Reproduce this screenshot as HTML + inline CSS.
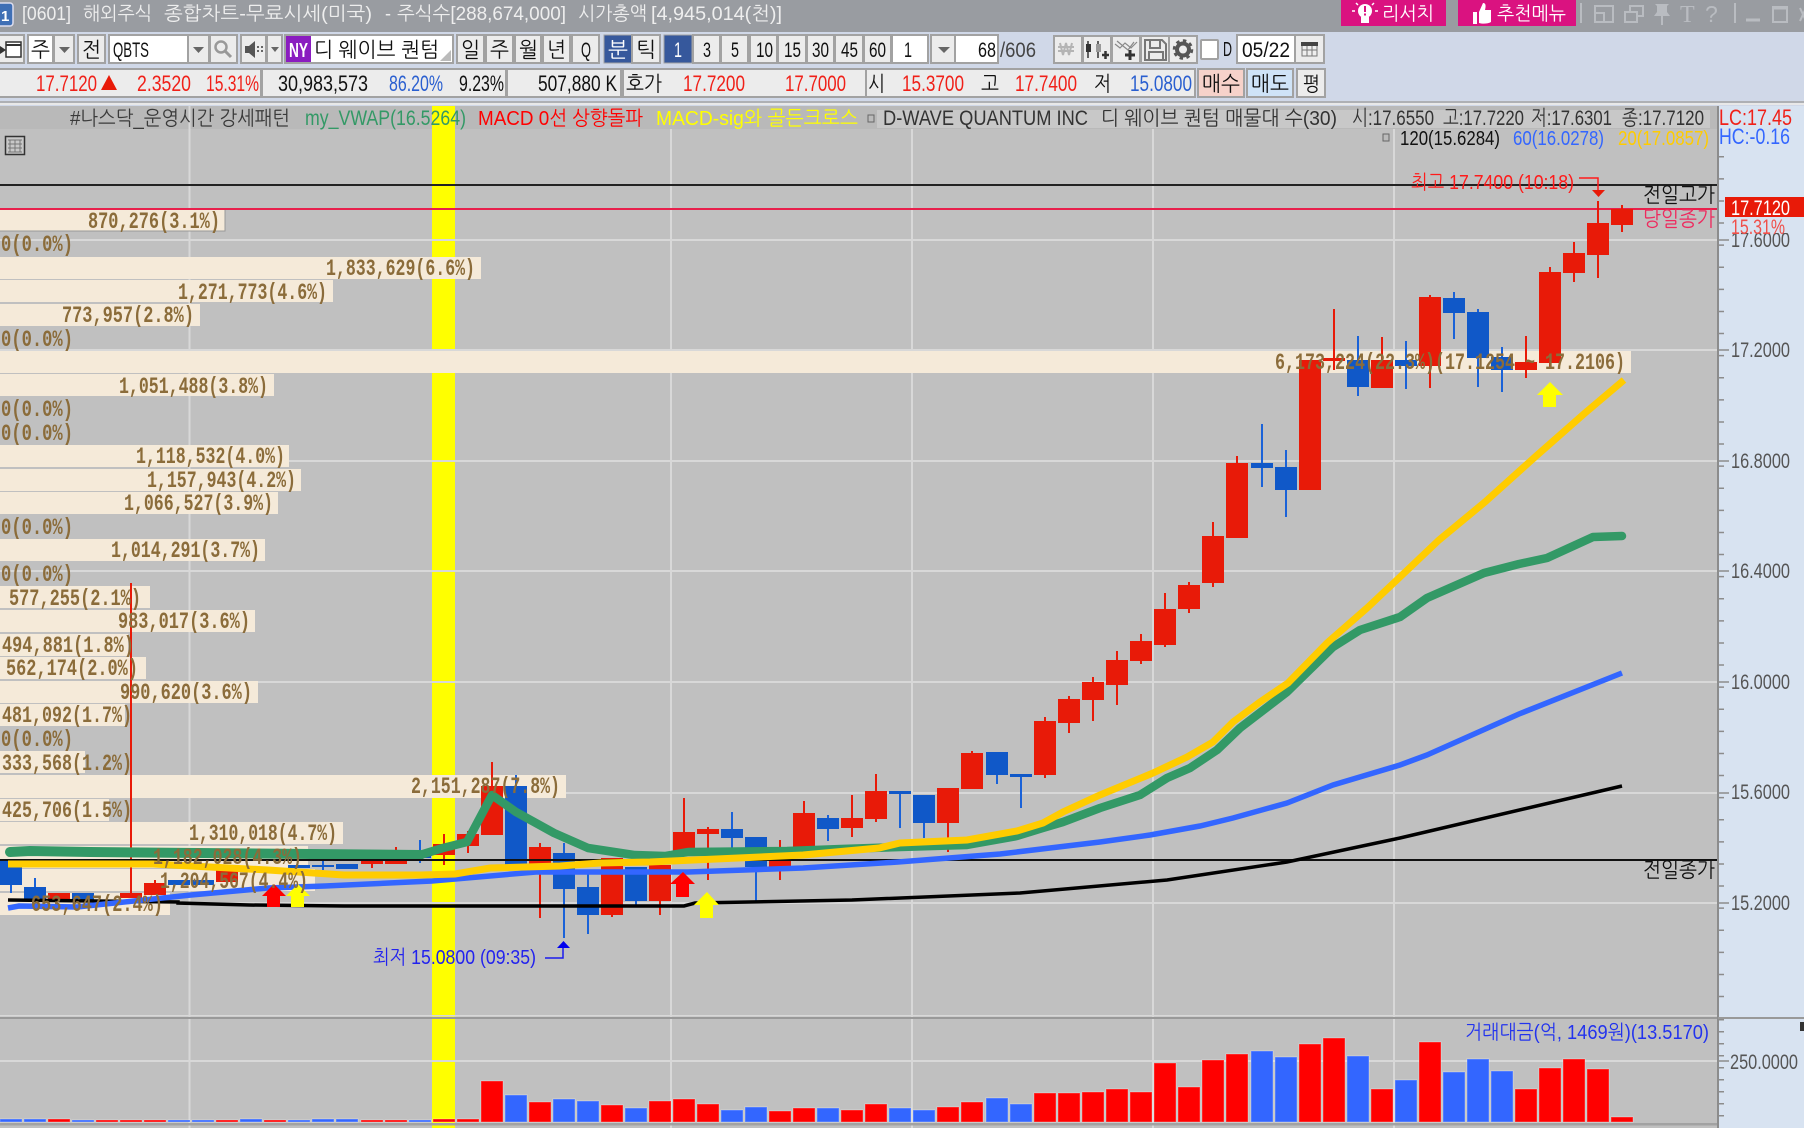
<!DOCTYPE html>
<html><head><meta charset="utf-8"><style>
html,body{margin:0;padding:0;background:#c0c0c0;width:1804px;height:1128px;overflow:hidden}
svg{display:block;position:absolute;left:0;top:0}
text{font-family:"Liberation Sans","NanumGothic","Noto Sans CJK KR",sans-serif;white-space:pre}
.b{fill:#ececec;stroke:#a2a2a2;stroke-width:2}
.w{fill:#fff;stroke:#a2a2a2;stroke-width:2}
.p text{font-family:"Liberation Mono",monospace;font-weight:bold;font-size:23px;fill:#8b6c3a;text-anchor:end}
</style></head><body>
<svg width="1804" height="1128" viewBox="0 0 1804 1128" xmlns="http://www.w3.org/2000/svg">
<!-- title bar -->
<rect width="1804" height="32" fill="#999ca1"/>
<rect x="-4" y="3" width="17" height="23" rx="3" fill="#3f6fb5" stroke="#dde" stroke-width="1.5"/>
<text x="1" y="21" font-size="15" font-weight="bold" fill="#fff">1</text>
<g font-size="19" fill="#eeeeee">
<text x="22" y="20" font-size="19" fill="#eeeeee" textLength="49" lengthAdjust="spacingAndGlyphs">[0601]</text>
<text x="83" y="20" font-size="19" fill="#eeeeee" textLength="69" lengthAdjust="spacingAndGlyphs">해외주식</text>
<text x="164" y="20" font-size="19" fill="#eeeeee" textLength="208" lengthAdjust="spacingAndGlyphs">종합차트-무료시세(미국)</text>
<text x="385" y="20" font-size="19" fill="#eeeeee" textLength="6" lengthAdjust="spacingAndGlyphs">-</text>
<text x="397" y="20" font-size="19" fill="#eeeeee" textLength="169" lengthAdjust="spacingAndGlyphs">주식수[288,674,000]</text>
<text x="578" y="20" font-size="19" fill="#eeeeee" textLength="69" lengthAdjust="spacingAndGlyphs">시가총액</text>
<text x="651" y="20" font-size="19" fill="#eeeeee" textLength="131" lengthAdjust="spacingAndGlyphs">[4,945,014(천)]</text>
</g>
<rect x="1341" y="0" width="105" height="26" fill="#da1280"/>
<rect x="1458" y="0" width="118" height="26" fill="#da1280"/>
<g fill="#fff"><circle cx="1365" cy="11" r="7"/><rect x="1361" y="17" width="8" height="6"/>
<path d="M1352 11h3M1375 11h3M1356 3l2 2M1374 3l-2 2" stroke="#fff" stroke-width="1.5"/>
<path d="M1473 12h4v12h-4zM1479 12l4-9c3 0 3 3 2 7h6v12c-3 2-9 2-12 1z"/></g>
<rect x="1364" y="6" width="2" height="6" fill="#da1280"/><rect x="1364" y="13.500" width="2" height="2" fill="#da1280"/>
<text x="1382" y="20" font-size="19" fill="#fff" textLength="52" lengthAdjust="spacingAndGlyphs">리서치</text>
<text x="1497" y="20" font-size="19" fill="#fff" textLength="69" lengthAdjust="spacingAndGlyphs">추천메뉴</text>
<g fill="none" stroke="#b9bcc1" stroke-width="2">
<path d="M1581 3v20M1735 3v20"/>
<path d="M1595 6h18v16h-18zM1595 13h9v9"/>
<path d="M1625 12h12v10h-12zM1630 12v-6h13v10h-6"/>
<path d="M1746 20h14" stroke-width="3"/><path d="M1773 7h14v15h-14z"/><path d="M1773 8h14" stroke-width="3"/>
<path d="M1800 8l6 13M1806 8l-6 13"/>
</g>
<path d="M1655 4h14l-2 2v6l3 4h-7v9h-2v-9h-7l3-4v-6z" fill="#b9bcc1"/>
<text x="1680" y="22" font-size="24" fill="#b9bcc1" style="font-family:'Liberation Serif',serif">T</text>
<text x="1705" y="22" font-size="23" fill="#b9bcc1">?</text>
<!-- toolbar -->
<rect y="32" width="1804" height="74" fill="#d0d8e8"/>
<rect y="101" width="1804" height="2" fill="#aeb0b4"/><rect y="103" width="1804" height="2" fill="#e8e8e8"/>
<!-- row 1 -->
<rect class="b" x="-3" y="35" width="27" height="28"/>
<path d="M6 42h15v15H6z" fill="#fff" stroke="#333" stroke-width="1.5"/><path d="M-3 44l9 6-9 6z" fill="#333"/><path d="M6 45h15" stroke="#333" stroke-width="2"/>
<rect class="w" x="28" y="35" width="25" height="28"/><rect class="b" x="54" y="35" width="20" height="28"/>
<path d="M59 47h11l-5.500 6z" fill="#666"/>
<text x="31" y="57" font-size="21" fill="#111" textLength="19" lengthAdjust="spacingAndGlyphs">주</text>
<rect class="b" x="78" y="35" width="27" height="28"/>
<text x="82" y="57" font-size="21" fill="#111" textLength="19" lengthAdjust="spacingAndGlyphs">전</text>
<rect class="w" x="109" y="35" width="79" height="28"/>
<text x="113" y="57" font-size="21" fill="#111" textLength="36" lengthAdjust="spacingAndGlyphs">QBTS</text>
<rect class="b" x="188" y="35" width="21" height="28"/><path d="M193 47h11l-5.500 6z" fill="#666"/>
<rect class="b" x="210" y="35" width="27" height="28"/>
<circle cx="221" cy="47" r="5.500" fill="none" stroke="#999" stroke-width="2.500"/><path d="M225 51l6 6" stroke="#999" stroke-width="3"/>
<rect class="b" x="241" y="35" width="25" height="28"/><rect class="b" x="267" y="35" width="15" height="28"/>
<path d="M245 46h4l6-5v17l-6-5h-4z" fill="#555"/><path d="M257 46h2v2h-2zM261 46h2v2h-2zM261 50h2v2h-2zM257 50h2v2h-2z" fill="#666"/>
<path d="M271 47h8l-4 5z" fill="#666"/>
<rect class="w" x="285" y="35" width="168" height="28"/>
<path d="M451 61h-11l11-11z" fill="#bbb"/>
<rect x="286" y="36" width="25" height="26" fill="#8a1cc0"/>
<text x="289" y="57" font-size="20" fill="#fff" font-weight="bold" textLength="19" lengthAdjust="spacingAndGlyphs">NY</text>
<text x="314" y="57" font-size="21" fill="#111" textLength="125" lengthAdjust="spacingAndGlyphs">디 웨이브 퀀텀</text>
<g>
<rect class="b" x="457" y="35" width="27" height="28"/><rect class="b" x="486" y="35" width="27" height="28"/><rect class="b" x="515" y="35" width="26" height="28"/><rect class="b" x="543" y="35" width="27" height="28"/><rect class="b" x="572" y="35" width="27" height="28"/>
<text x="461" y="57" font-size="21" fill="#111" textLength="19" lengthAdjust="spacingAndGlyphs">일</text>
<text x="490" y="57" font-size="21" fill="#111" textLength="19" lengthAdjust="spacingAndGlyphs">주</text>
<text x="519" y="57" font-size="21" fill="#111" textLength="19" lengthAdjust="spacingAndGlyphs">월</text>
<text x="547" y="57" font-size="21" fill="#111" textLength="19" lengthAdjust="spacingAndGlyphs">년</text>
<text x="581" y="57" font-size="21" fill="#111" textLength="10" lengthAdjust="spacingAndGlyphs">Q</text>
</g>
<rect x="604" y="35" width="28" height="28" fill="#36589c" stroke="#a2a2a2"/>
<text x="608" y="57" font-size="21" fill="#fff" textLength="20" lengthAdjust="spacingAndGlyphs">분</text>
<rect class="b" x="632" y="35" width="28" height="28"/>
<text x="636" y="57" font-size="21" fill="#111" textLength="20" lengthAdjust="spacingAndGlyphs">틱</text>
<rect x="664" y="35" width="28" height="28" fill="#36589c" stroke="#a2a2a2"/>
<text x="674" y="57" font-size="21" fill="#fff" textLength="8" lengthAdjust="spacingAndGlyphs">1</text>
<rect class="b" x="693" y="35" width="27" height="28"/><rect class="b" x="721" y="35" width="27" height="28"/><rect class="b" x="750" y="35" width="27" height="28"/><rect class="b" x="778" y="35" width="28" height="28"/><rect class="b" x="807" y="35" width="27" height="28"/><rect class="b" x="835" y="35" width="28" height="28"/><rect class="b" x="864" y="35" width="27" height="28"/>
<rect class="w" x="892" y="35" width="36" height="28"/>
<text x="703" y="57" font-size="21" fill="#111" textLength="8" lengthAdjust="spacingAndGlyphs">3</text>
<text x="731" y="57" font-size="21" fill="#111" textLength="8" lengthAdjust="spacingAndGlyphs">5</text>
<text x="756" y="57" font-size="21" fill="#111" textLength="17" lengthAdjust="spacingAndGlyphs">10</text>
<text x="784" y="57" font-size="21" fill="#111" textLength="17" lengthAdjust="spacingAndGlyphs">15</text>
<text x="812" y="57" font-size="21" fill="#111" textLength="17" lengthAdjust="spacingAndGlyphs">30</text>
<text x="841" y="57" font-size="21" fill="#111" textLength="17" lengthAdjust="spacingAndGlyphs">45</text>
<text x="869" y="57" font-size="21" fill="#111" textLength="17" lengthAdjust="spacingAndGlyphs">60</text>
<text x="904" y="57" font-size="21" fill="#111" textLength="8" lengthAdjust="spacingAndGlyphs">1</text>
<rect class="b" x="931" y="35" width="26" height="28"/><path d="M938 47h12l-6 6z" fill="#666"/>
<rect class="w" x="955" y="35" width="43" height="28"/>
<text x="978" y="57" font-size="21" fill="#111" textLength="18" lengthAdjust="spacingAndGlyphs">68</text>
<text x="1000" y="57" font-size="21" fill="#444" textLength="36" lengthAdjust="spacingAndGlyphs">/606</text>
<rect class="b" x="1054" y="36" width="28" height="27"/><rect class="b" x="1083" y="36" width="28" height="27"/><rect class="b" x="1112" y="36" width="28" height="27"/><rect class="b" x="1141" y="36" width="28" height="27"/><rect class="b" x="1169" y="36" width="28" height="27"/>
<path d="M1060 43l3 12 3-12 3 12 3-12M1058 47h16M1058 51h16" fill="none" stroke="#b4b4b4" stroke-width="2"/>
<path d="M1088 41v17M1098 41v17" stroke="#333" stroke-width="1.500"/><rect x="1086" y="44" width="5" height="8" fill="#333"/><rect x="1096" y="44" width="5" height="8" fill="#999"/><path d="M1102 55h7M1105.500 51v8" stroke="#333" stroke-width="2.500"/>
<path d="M1115 44l5 4 5-5 6 5 6-6M1117 41l6 5 5 4 6-8" fill="none" stroke="#888" stroke-width="1.200"/><path d="M1125 55h10M1130 50v10" stroke="#333" stroke-width="3"/>
<path d="M1145 40h17l4 4v16h-21z M1150 41v7h10v-7 M1149 60v-8h14v8" fill="none" stroke="#777" stroke-width="2"/>
<circle cx="1183" cy="49.500" r="6" fill="none" stroke="#555" stroke-width="4"/><circle cx="1183" cy="49.500" r="9" fill="none" stroke="#555" stroke-width="2.500" stroke-dasharray="3.500 3.500"/>
<rect class="w" x="1201" y="40" width="17" height="19" rx="1"/>
<text x="1223" y="56" font-size="20" fill="#111" textLength="9" lengthAdjust="spacingAndGlyphs">D</text>
<rect class="w" x="1237" y="35" width="58" height="28"/>
<text x="1242" y="57" font-size="21" fill="#111" textLength="48" lengthAdjust="spacingAndGlyphs">05/22</text>
<rect class="b" x="1295" y="35" width="29" height="28"/>
<path d="M1302 44h15v12h-15zM1302 50h15M1307 44v12M1312 44v12" fill="#eee" stroke="#777" stroke-width="1"/><rect x="1301" y="42" width="17" height="4" fill="#444"/>
<!-- row 2 -->
<rect class="b" x="-2" y="69" width="263" height="28"/><rect class="b" x="262" y="69" width="244" height="28"/><rect class="b" x="507" y="69" width="114" height="28"/><rect class="b" x="623" y="69" width="243" height="28"/><rect class="b" x="866" y="69" width="329" height="28"/>
<text x="36" y="91" font-size="22" fill="#f02018" textLength="61" lengthAdjust="spacingAndGlyphs">17.7120</text>
<path d="M109 75l8 15h-16z" fill="#e81a08"/>
<text x="137" y="91" font-size="22" fill="#f02018" textLength="54" lengthAdjust="spacingAndGlyphs">2.3520</text>
<text x="206" y="91" font-size="22" fill="#f02018" textLength="53" lengthAdjust="spacingAndGlyphs">15.31%</text>
<text x="278" y="91" font-size="22" fill="#111" textLength="90" lengthAdjust="spacingAndGlyphs">30,983,573</text>
<text x="389" y="91" font-size="22" fill="#2a5fd0" textLength="54" lengthAdjust="spacingAndGlyphs">86.20%</text>
<text x="459" y="91" font-size="22" fill="#111" textLength="45" lengthAdjust="spacingAndGlyphs">9.23%</text>
<text x="538" y="91" font-size="22" fill="#111" textLength="79" lengthAdjust="spacingAndGlyphs">507,880 K</text>
<text x="626" y="91" font-size="21" fill="#111" textLength="36" lengthAdjust="spacingAndGlyphs">호가</text>
<text x="683" y="91" font-size="22" fill="#f02018" textLength="62" lengthAdjust="spacingAndGlyphs">17.7200</text>
<text x="785" y="91" font-size="22" fill="#f02018" textLength="61" lengthAdjust="spacingAndGlyphs">17.7000</text>
<text x="868" y="91" font-size="21" fill="#111" textLength="17" lengthAdjust="spacingAndGlyphs">시</text>
<text x="902" y="91" font-size="22" fill="#f02018" textLength="62" lengthAdjust="spacingAndGlyphs">15.3700</text>
<text x="981" y="91" font-size="21" fill="#111" textLength="18" lengthAdjust="spacingAndGlyphs">고</text>
<text x="1015" y="91" font-size="22" fill="#f02018" textLength="62" lengthAdjust="spacingAndGlyphs">17.7400</text>
<text x="1094" y="91" font-size="21" fill="#111" textLength="17" lengthAdjust="spacingAndGlyphs">저</text>
<text x="1130" y="91" font-size="22" fill="#2a5fd0" textLength="62" lengthAdjust="spacingAndGlyphs">15.0800</text>
<rect x="1198" y="69" width="46" height="28" fill="#f6d2ca" stroke="#a2a2a2" stroke-width="2"/>
<text x="1202" y="91" font-size="21" fill="#111" textLength="38" lengthAdjust="spacingAndGlyphs">매수</text>
<rect x="1247" y="69" width="46" height="28" fill="#cfe3f7" stroke="#a2a2a2" stroke-width="2"/>
<text x="1251" y="91" font-size="21" fill="#111" textLength="38" lengthAdjust="spacingAndGlyphs">매도</text>
<rect class="b" x="1297" y="69" width="28" height="28"/>
<text x="1303" y="91" font-size="20" fill="#111" textLength="17" lengthAdjust="spacingAndGlyphs">평</text>

<!-- chart -->
<rect y="106" width="1718" height="1017" fill="#c0c0c0"/>
<rect y="106" width="1718" height="23" fill="#b9b9b9"/>
<rect x="877" y="110" width="833" height="18" fill="#c8c8c8"/>
<rect x="432" y="106" width="23" height="1022" fill="#ffff00"/>
<g fill="none" stroke="#d8d8d8" stroke-width="2">
<path d="M189.500 106V1128M671 129V1128M912 129V1128M1153 129V1128M1394 129V1128"/>
<path d="M0 240H1718M0 350H1718M0 461H1718M0 571H1718M0 682H1718M0 793H1718M0 903H1718M0 1061H1718"/>
</g>
<rect y="1015" width="1718" height="1.500" fill="#d8d8d8"/><rect y="1017" width="1804" height="2" fill="#999"/>
<!-- profile bars -->
<path fill="#f5ead9" d="M0 210H225v21H0zM0 257H481v22H0zM0 280H333v22H0zM0 304H200v22H0zM0 351H1631v22H0zM0 374H274v22H0zM0 445H289v22H0zM0 469H301v22H0zM0 492H278v22H0zM0 539H265v22H0zM0 586H150v22H0zM0 610H255v22H0zM0 634H128v22H0zM0 657H146v22H0zM0 681H258v22H0zM0 704H125v22H0zM0 751H85v22H0zM0 775H566v23H0zM0 799H109v22H0zM0 822H343v22H0zM0 846H308v22H0zM0 869H315v22H0zM0 893H170v22H0z"/>
<path d="M225 210v21H0" fill="none" stroke="#999" stroke-width="1"/>
<!-- small table icon -->
<rect x="5.500" y="136.500" width="19" height="18" fill="#c8c8c8" stroke="#333" stroke-width="1.500"/>
<path d="M8 140h14M8 144h14M8 148h14M8 152h14M10 140v12M15 140v12M20 140v12" stroke="#777" stroke-width="1"/>
<!-- hlines -->
<rect y="184" width="1718" height="2" fill="#222"/>
<rect y="208" width="1718" height="2" fill="#e8204c"/>
<!-- candle wicks -->
<path fill="none" stroke="#e81a08" stroke-width="2" d="M1622 205V232M1598 201V278M1574 242V282M1550 267V368M1526 336V378M1430 295V388M1382 337V388M1334 309V370M1237 456V538M1213 522V587M1189 582V613M1165 593V647M1141 634V664M1117 651V705M1093 677V721M1069 696V733M1045 717V778M972 751V789M948 788V852M876 774V822M852 795V837M804 801V850M780 840V880M708 827V880M684 798V852M660 865V915M612 858V917M540 843V918M492 762V835M468 831V853M444 834V865M396 847V864M372 860V868M227 870V882M155 880V895M131 583V898"/>
<path fill="none" stroke="#1a62d8" stroke-width="2" d="M1502 347V392M1478 309V387M1454 292V339M1406 341V389M1358 336V396M1286 450V517M1262 424V487M1021 777V808M997 775V784M924 823V838M900 794V828M828 815V841M756 837V901M732 812V850M636 867V905M588 873V934M564 843V938M516 775V865M420 840V863M323 860V870M35 878V900M11 885V893"/>
<!-- candle bodies -->
<path fill="#e81a08" d="M1611 209h22V225h-22zM1587 223h22V255h-22zM1563 253h22V273h-22zM1539 272h22V363h-22zM1515 362h22V370h-22zM1419 297h22V366h-22zM1371 360h22V388h-22zM1323 358h22V361h-22zM1299 360h22V490h-22zM1226 463h22V538h-22zM1202 536h22V583h-22zM1178 585h22V609h-22zM1154 609h22V645h-22zM1130 641h22V661h-22zM1106 660h22V685h-22zM1082 682h22V700h-22zM1058 699h22V723h-22zM1034 721h22V775h-22zM961 753h22V789h-22zM937 788h22V823h-22zM865 791h22V819h-22zM841 818h22V828h-22zM793 813h22V850h-22zM769 860h22V867h-22zM697 829h22V834h-22zM673 832h22V852h-22zM649 865h22V901h-22zM601 858h22V915h-22zM529 847h22V872h-22zM481 786h22V835h-22zM457 834h22V846h-22zM433 844h22V855h-22zM385 860h22V864h-22zM361 860h22V864h-22zM216 870h22V882h-22zM144 883h22V895h-22zM120 893h22V898h-22zM48 893h22V900h-22z"/>
<path fill="#1058c8" d="M1491 357h22V370h-22zM1467 312h22V358h-22zM1443 298h22V313h-22zM1395 360h22V366h-22zM1347 360h22V387h-22zM1275 467h22V490h-22zM1251 463h22V468h-22zM1010 774h22V777h-22zM986 752h22V775h-22zM913 795h22V823h-22zM889 791h22V794h-22zM817 818h22V829h-22zM745 837h22V867h-22zM721 829h22V838h-22zM625 867h22V901h-22zM577 887h22V915h-22zM553 853h22V889h-22zM505 786h22V865h-22zM409 856h22V858h-22zM336 864h22V869h-22zM312 865h22V867h-22zM288 865h22V868h-22zM168 880h22V885h-22zM192 880h22V885h-22zM72 893h22V900h-22zM24 887h22V900h-22zM0 860h22V885h-22z"/>
<!-- MAs -->
<polyline fill="none" stroke="#339966" stroke-width="8.500" stroke-linecap="round" stroke-linejoin="round" points="420,855 443,848 467,842 492,795 516,812 554,833 588,848 634,855 665,856 688,852 787,851 841,849 900,847 967,845 1017,836 1043,828 1063,822 1100,808 1140,795 1167,778 1190,768 1217,750 1240,728 1287,692 1333,647 1360,630 1400,617 1427,598 1484,573 1519,564 1547,558 1593,537 1622,536"/>
<polyline fill="none" stroke="#339966" stroke-width="10" stroke-linecap="round" stroke-linejoin="round" points="10,852 30,851 90,852 420,855"/>
<rect y="859" width="1718" height="2" fill="#111"/>
<polyline fill="none" stroke="#000" stroke-width="3.500" points="8,900 178,902 178,903 249,905 344,906 684,906 695,903 852,900 1020,893 1167,880 1287,862 1400,838 1622,786"/>
<polyline fill="none" stroke="#3366ff" stroke-width="5.500" points="8,908 19,906 77,907 191,895 268,888 325,886 432,881 536,872 600,872 688,872 803,868 898,862 1000,854 1100,842 1150,835 1200,826 1233,818 1287,803 1333,785 1400,765 1427,755 1519,714 1622,673"/>
<polyline fill="none" stroke="#ffcc00" stroke-width="7" points="8,864 153,864 268,870 344,875 421,875 455,874 490,868 560,866 600,863 650,862 803,855 879,848 900,843 967,840 1017,831 1043,823 1063,812 1100,795 1153,773 1187,757 1213,742 1233,722 1260,702 1288,683 1327,643 1367,608 1400,577 1439,540 1485,502 1535,457 1585,413 1624,380"/>
<!-- arrows -->
<path fill="#ffff00" d="M1550 382l13 13h-7v12h-13v-12h-6zM298 884l12 12h-6v11h-13v-11h-5zM707 892l12 13h-6v13h-13v-13h-6z"/>
<path fill="#ff0000" d="M274 884l12 12h-6v11h-13v-11h-5zM683 872l12 12h-6v13h-13v-13h-6z"/>
<!-- profile labels -->
<g class="p">
<text x="220" y="228" textLength="132" lengthAdjust="spacingAndGlyphs">870,276(3.1%)</text>
<text x="73" y="251" textLength="72" lengthAdjust="spacingAndGlyphs">0(0.0%)</text>
<text x="475" y="275" textLength="149" lengthAdjust="spacingAndGlyphs">1,833,629(6.6%)</text>
<text x="327" y="299" textLength="149" lengthAdjust="spacingAndGlyphs">1,271,773(4.6%)</text>
<text x="194" y="322" textLength="132" lengthAdjust="spacingAndGlyphs">773,957(2.8%)</text>
<text x="73" y="346" textLength="72" lengthAdjust="spacingAndGlyphs">0(0.0%)</text>
<text x="1625" y="369" textLength="350" lengthAdjust="spacingAndGlyphs">6,173,224(22.3%)(17.1254 ~ 17.2106)</text>
<text x="268" y="393" textLength="149" lengthAdjust="spacingAndGlyphs">1,051,488(3.8%)</text>
<text x="73" y="416" textLength="72" lengthAdjust="spacingAndGlyphs">0(0.0%)</text>
<text x="73" y="440" textLength="72" lengthAdjust="spacingAndGlyphs">0(0.0%)</text>
<text x="285" y="463" textLength="149" lengthAdjust="spacingAndGlyphs">1,118,532(4.0%)</text>
<text x="296" y="487" textLength="149" lengthAdjust="spacingAndGlyphs">1,157,943(4.2%)</text>
<text x="273" y="510" textLength="149" lengthAdjust="spacingAndGlyphs">1,066,527(3.9%)</text>
<text x="73" y="534" textLength="72" lengthAdjust="spacingAndGlyphs">0(0.0%)</text>
<text x="260" y="557" textLength="149" lengthAdjust="spacingAndGlyphs">1,014,291(3.7%)</text>
<text x="73" y="581" textLength="72" lengthAdjust="spacingAndGlyphs">0(0.0%)</text>
<text x="141" y="605" textLength="132" lengthAdjust="spacingAndGlyphs">577,255(2.1%)</text>
<text x="250" y="628" textLength="132" lengthAdjust="spacingAndGlyphs">983,017(3.6%)</text>
<text x="134" y="652" textLength="132" lengthAdjust="spacingAndGlyphs">494,881(1.8%)</text>
<text x="138" y="675" textLength="132" lengthAdjust="spacingAndGlyphs">562,174(2.0%)</text>
<text x="252" y="699" textLength="132" lengthAdjust="spacingAndGlyphs">990,620(3.6%)</text>
<text x="132" y="722" textLength="130" lengthAdjust="spacingAndGlyphs">481,092(1.7%)</text>
<text x="73" y="746" textLength="72" lengthAdjust="spacingAndGlyphs">0(0.0%)</text>
<text x="132" y="770" textLength="130" lengthAdjust="spacingAndGlyphs">333,568(1.2%)</text>
<text x="560" y="793" textLength="149" lengthAdjust="spacingAndGlyphs">2,151,287(7.8%)</text>
<text x="132" y="817" textLength="130" lengthAdjust="spacingAndGlyphs">425,706(1.5%)</text>
<text x="337" y="840" textLength="148" lengthAdjust="spacingAndGlyphs">1,310,018(4.7%)</text>
<text x="302" y="864" textLength="149" lengthAdjust="spacingAndGlyphs">1,182,028(4.3%)</text>
<text x="308" y="888" textLength="148" lengthAdjust="spacingAndGlyphs">1,204,567(4.4%)</text>
<text x="163" y="911" textLength="132" lengthAdjust="spacingAndGlyphs">653,647(2.4%)</text>
</g>
<!-- header -->
<text x="70" y="125" font-size="20" fill="#3a3a3a" textLength="220" lengthAdjust="spacingAndGlyphs">#나스닥_운영시간 강세패턴</text>
<text x="305" y="125" font-size="21" fill="#339966" textLength="161" lengthAdjust="spacingAndGlyphs">my_VWAP(16.5264)</text>
<text x="478" y="125" font-size="20" fill="#ff0000" textLength="165" lengthAdjust="spacingAndGlyphs">MACD 0선 상향돌파</text>
<text x="656" y="125" font-size="20" fill="#ffff00" textLength="202" lengthAdjust="spacingAndGlyphs">MACD-sig와 골든크로스</text>
<rect x="868" y="115" width="6" height="7" fill="#bbb" stroke="#666"/>
<text x="883" y="125" font-size="21" fill="#333" textLength="205" lengthAdjust="spacingAndGlyphs">D-WAVE QUANTUM INC</text>
<text x="1101" y="125" font-size="20" fill="#333" textLength="236" lengthAdjust="spacingAndGlyphs">디 웨이브 퀀텀 매물대 수(30)</text>
<text x="1352" y="125" font-size="21" fill="#333" textLength="82" lengthAdjust="spacingAndGlyphs">시:17.6550</text>
<text x="1443" y="125" font-size="21" fill="#333" textLength="81" lengthAdjust="spacingAndGlyphs">고:17.7220</text>
<text x="1531" y="125" font-size="21" fill="#333" textLength="81" lengthAdjust="spacingAndGlyphs">저:17.6301</text>
<text x="1622" y="125" font-size="21" fill="#333" textLength="82" lengthAdjust="spacingAndGlyphs">종:17.7120</text>
<rect x="1383" y="134" width="6" height="7" fill="#bbb" stroke="#666"/>
<text x="1400" y="145" font-size="20" fill="#111" textLength="100" lengthAdjust="spacingAndGlyphs">120(15.6284)</text>
<text x="1513" y="145" font-size="20" fill="#3366ff" textLength="91" lengthAdjust="spacingAndGlyphs">60(16.0278)</text>
<text x="1618" y="145" font-size="20" fill="#ffcc00" textLength="91" lengthAdjust="spacingAndGlyphs">20(17.0857)</text>
<!-- high / low labels -->
<text x="1411" y="189" font-size="20" fill="#ff1a1a" textLength="163" lengthAdjust="spacingAndGlyphs">최고 17.7400 (10:18)</text>
<path d="M1579 178H1598V191" fill="none" stroke="#ff1a1a" stroke-width="1.500"/><path d="M1592 190h13l-6.500 7z" fill="#e81a08"/>
<text x="1643" y="202" font-size="21" fill="#111" textLength="72" lengthAdjust="spacingAndGlyphs">전일고가</text>
<text x="1643" y="226" font-size="21" fill="#ee2a5e" textLength="72" lengthAdjust="spacingAndGlyphs">당일종가</text>
<text x="1643" y="877" font-size="21" fill="#111" textLength="72" lengthAdjust="spacingAndGlyphs">전일종가</text>
<text x="373" y="964" font-size="20" fill="#2222ee" textLength="163" lengthAdjust="spacingAndGlyphs">최저 15.0800 (09:35)</text>
<path d="M545 958H563V947" fill="none" stroke="#1a1aee" stroke-width="1.500"/><path d="M557 948h13l-6.500-7z" fill="#0000ee"/>
<!-- volume -->
<path fill="#ff0000" stroke="#fff" stroke-opacity=".3" d="M48 1119V1122h22V1119zM96 1120V1122h22V1120zM120 1120V1122h22V1120zM144 1120V1122h22V1120zM216 1120V1122h22V1120zM264 1120V1122h22V1120zM361 1120V1122h22V1120zM385 1120V1122h22V1120zM433 1119V1122h22V1119zM457 1119V1122h22V1119zM481 1081V1122h22V1081zM529 1102V1122h22V1102zM601 1105V1122h22V1105zM649 1101V1122h22V1101zM673 1099V1122h22V1099zM697 1104V1122h22V1104zM769 1111V1122h22V1111zM793 1108V1122h22V1108zM841 1110V1122h22V1110zM865 1104V1122h22V1104zM937 1107V1122h22V1107zM961 1102V1122h22V1102zM1034 1093V1122h22V1093zM1058 1093V1122h22V1093zM1082 1092V1122h22V1092zM1106 1089V1122h22V1089zM1130 1092V1122h22V1092zM1154 1063V1122h22V1063zM1178 1087V1122h22V1087zM1202 1060V1122h22V1060zM1226 1054V1122h22V1054zM1299 1044V1122h22V1044zM1323 1038V1122h22V1038zM1371 1089V1122h22V1089zM1419 1042V1122h22V1042zM1515 1089V1122h22V1089zM1539 1068V1122h22V1068zM1563 1059V1122h22V1059zM1587 1069V1122h22V1069zM1611 1117V1122h22V1117z"/>
<path fill="#3366ff" stroke="#fff" stroke-opacity=".3" d="M0 1119V1122h22V1119zM24 1119V1122h22V1119zM72 1120V1122h22V1120zM168 1120V1122h22V1120zM192 1120V1122h22V1120zM240 1119V1122h22V1119zM288 1120V1122h22V1120zM312 1119V1122h22V1119zM336 1119V1122h22V1119zM409 1120V1122h22V1120zM505 1095V1122h22V1095zM553 1099V1122h22V1099zM577 1101V1122h22V1101zM625 1108V1122h22V1108zM721 1110V1122h22V1110zM745 1107V1122h22V1107zM817 1108V1122h22V1108zM889 1108V1122h22V1108zM913 1110V1122h22V1110zM986 1098V1122h22V1098zM1010 1104V1122h22V1104zM1251 1051V1122h22V1051zM1275 1057V1122h22V1057zM1347 1056V1122h22V1056zM1395 1080V1122h22V1080zM1443 1072V1122h22V1072zM1467 1059V1122h22V1059zM1491 1071V1122h22V1071z"/>
<rect y="1123" width="1718" height="2.500" fill="#a2a2a2"/>
<text x="1465" y="1039" font-size="20" fill="#2233ee" textLength="244" lengthAdjust="spacingAndGlyphs">거래대금(억, 1469원)(13.5170)</text>
<!-- right axis -->
<rect x="1718" y="106" width="86" height="1022" fill="#d8e3f1"/>
<rect x="1717" y="106" width="2" height="1022" fill="#8c8c8c"/>
<rect x="1718" y="1017" width="86" height="2" fill="#999"/>
<text x="1719" y="125" font-size="22" fill="#f02018" textLength="73" lengthAdjust="spacingAndGlyphs">LC:17.45</text>
<text x="1719" y="144" font-size="22" fill="#3366ff" textLength="71" lengthAdjust="spacingAndGlyphs">HC:-0.16</text>
<path d="M1721 152V1010" stroke="#8c8c8c" stroke-width="6" stroke-dasharray="1.500 20.600" stroke-dashoffset="-4" fill="none"/>
<path d="M1721 1019V1123" stroke="#8c8c8c" stroke-width="6" stroke-dasharray="1.500 10.500" fill="none"/>
<path d="M1718 240h11M1718 350h11M1718 461h11M1718 571h11M1718 682h11M1718 793h11M1718 903h11M1718 1061h11" stroke="#8c8c8c" stroke-width="1.500"/>
<g>
<text x="1731" y="247" font-size="21" fill="#555" textLength="59" lengthAdjust="spacingAndGlyphs">17.6000</text>
<text x="1731" y="357" font-size="21" fill="#555" textLength="59" lengthAdjust="spacingAndGlyphs">17.2000</text>
<text x="1731" y="468" font-size="21" fill="#555" textLength="59" lengthAdjust="spacingAndGlyphs">16.8000</text>
<text x="1731" y="578" font-size="21" fill="#555" textLength="59" lengthAdjust="spacingAndGlyphs">16.4000</text>
<text x="1731" y="689" font-size="21" fill="#555" textLength="59" lengthAdjust="spacingAndGlyphs">16.0000</text>
<text x="1731" y="799" font-size="21" fill="#555" textLength="59" lengthAdjust="spacingAndGlyphs">15.6000</text>
<text x="1731" y="910" font-size="21" fill="#555" textLength="59" lengthAdjust="spacingAndGlyphs">15.2000</text>
<text x="1730" y="1069" font-size="21" fill="#555" textLength="68" lengthAdjust="spacingAndGlyphs">250.0000</text>
</g>
<rect x="1725" y="217" width="79" height="16" fill="#d8e3f1"/>
<rect x="1725" y="197" width="79" height="20" fill="#e81a08"/>
<text x="1731" y="215" font-size="21" fill="#fff" textLength="59" lengthAdjust="spacingAndGlyphs">17.7120</text>
<text x="1731" y="234" font-size="21" fill="#f0504a" textLength="54" lengthAdjust="spacingAndGlyphs">15.31%</text>
<rect x="1800" y="1022" width="4" height="9" fill="#333"/>
</svg>
</body></html>
